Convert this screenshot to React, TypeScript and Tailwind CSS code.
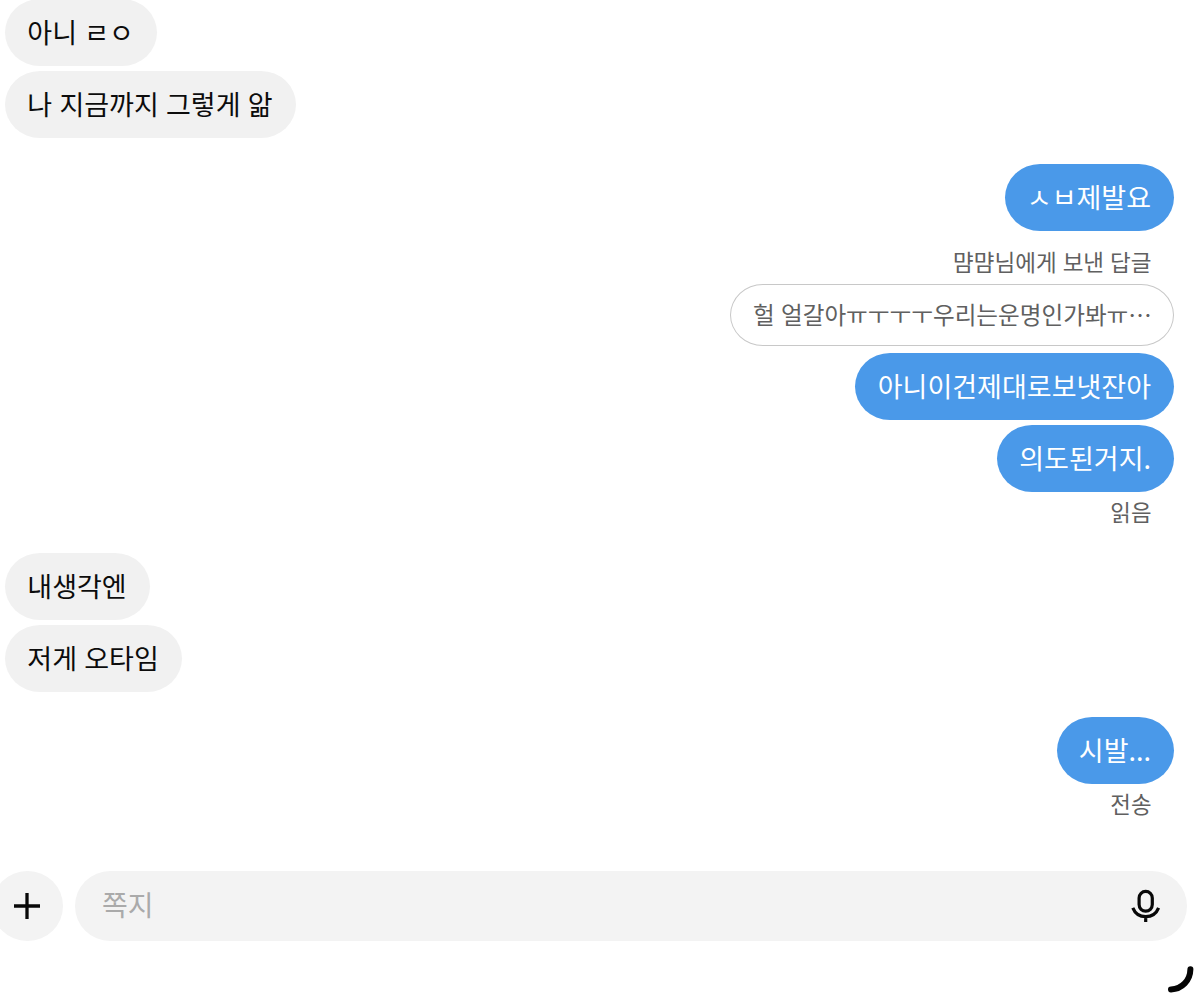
import clsx from 'clsx';

type Message = {
  text: string;
  mine?: boolean;
  replyTo?: { label: string; quote: string };
  status?: string;
  className?: string;
};

const messages: Message[] = [
  { text: '아니 ㄹㅇ' },
  { text: '나 지금까지 그렇게 앎', className: 'mt-[5px]' },
  {
    text: 'ㅅㅂ제발요',
    mine: true,
    className: 'mt-[26px]',
  },
  {
    text: '아니이건제대로보냇잔아',
    mine: true,
    replyTo: { label: '먐먐님에게 보낸 답글', quote: '헐 얼갈아ㅠㅜㅜㅜ우리는운명인가봐ㅠ⋯' },
    className: 'mt-4',
  },
  { text: '의도된거지.', mine: true, status: '읽음', className: 'mt-[5px]' },
  { text: '내생각엔', className: 'mt-[21px]' },
  { text: '저게 오타임', className: 'mt-[5px]' },
  { text: '시발...', mine: true, status: '전송', className: 'mt-[25.5px]' },
];

function Bubble({ text, mine }: { text: string; mine?: boolean }) {
  return (
    <div
      className={clsx(
        'h-[67px] rounded-[35px/33.5px] pr-[23px] pl-[22.3px] text-[27px] leading-[65px] whitespace-nowrap [word-spacing:1.2px]',
        mine ? 'bg-[#4a99e9] text-white' : 'bg-[#f1f1f1] text-[#0c0c0c]',
      )}
    >
      {text}
    </div>
  );
}

function MessageRow({ text, mine, replyTo, status, className }: Message) {
  return (
    <div className={clsx('flex flex-col', mine ? 'items-end' : 'items-start', className)}>
      {replyTo && (
        <>
          <p className="h-[37px] pr-[22.5px] text-[22.5px] leading-[29px] text-[#606060] [word-spacing:1px]">
            {replyTo.label}
          </p>
          <div className="mb-[6.5px] h-[62px] w-[444px] rounded-[33px/31px] border-[1.5px] border-[#c8c8c8] pl-[22px] text-[23.6px] leading-[59px] whitespace-nowrap text-[#606060] [word-spacing:1px]">
            {replyTo.quote}
          </div>
        </>
      )}
      <Bubble text={text} mine={mine} />
      {status && <p className="h-10 pr-[22.5px] text-[22.4px] leading-[38px] text-[#606060]">{status}</p>}
    </div>
  );
}

function MicIcon() {
  return (
    <svg width="30" height="36" viewBox="0 0 30 36" fill="none" stroke="#080808" strokeWidth="3.2">
      <rect x="8.1" y="3.4" width="13.2" height="19.8" rx="6.6" />
      <path d="M1.8 19.8C4.2 25.8 9.2 28.6 14.7 28.6S25.2 25.8 27.6 19.8M14.7 28.5v5.5" />
    </svg>
  );
}

export default function App() {
  return (
    <div className="relative flex h-[999px] w-[1200px] flex-col overflow-hidden bg-white font-['Noto_Sans_CJK_KR',sans-serif]">
      <div className="-mt-px h-[872px] pr-[26px] pl-[5px]">
        {messages.map((m) => (
          <MessageRow key={m.text} {...m} />
        ))}
      </div>

      {/* Composer */}
      <div className="-ml-2 flex h-[70px] w-[1195px] gap-3">
        <button className="flex h-[70px] w-[71px] shrink-0 items-center justify-center rounded-full bg-[#f3f3f3] pr-px">
          <svg width="26" height="26" viewBox="0 0 26 26" stroke="#080808" strokeWidth="3.3">
            <path d="M0 13h26M13 0v26" />
          </svg>
        </button>
        <div className="flex flex-1 items-center justify-between rounded-full bg-[#f3f3f3] pr-[26px] pl-[27px]">
          <span className="pb-1 text-[28px] leading-[66px] text-[#aaaaaa]">쪽지</span>
          <MicIcon />
        </div>
      </div>

      {/* Floating spinner arc in the corner */}
      <svg className="absolute top-[963px] left-[1165px]" width="32" height="32" viewBox="0 0 32 32" fill="none">
        <path d="M25.4 6.2C25.2 17.5 17 26 6 26.4" stroke="#050505" strokeWidth="6" strokeLinecap="round" />
      </svg>
    </div>
  );
}
